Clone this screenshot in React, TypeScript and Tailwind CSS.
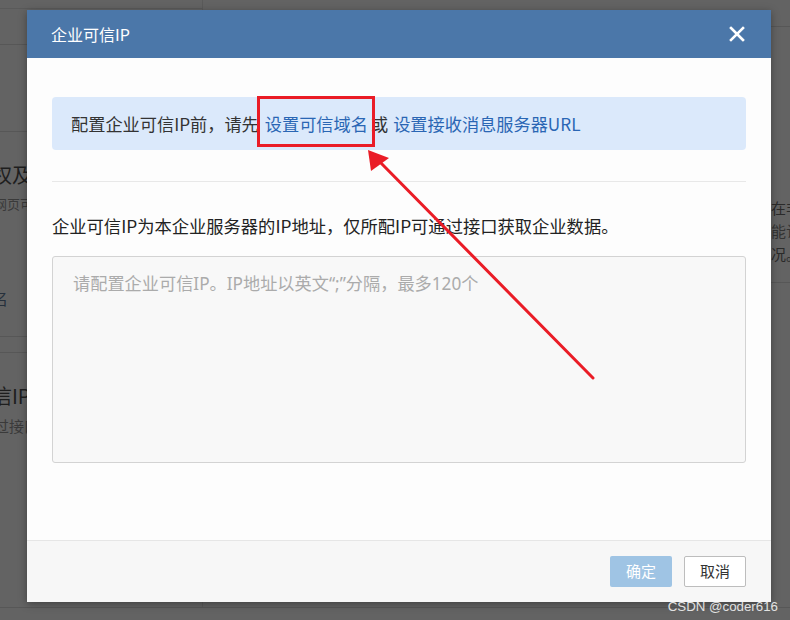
const cjk = "font-['Noto_Sans_CJK_SC',_'Noto_Sans',_sans-serif]";

function BackdropPage() {
  return (
    <div className="flex h-full w-full flex-col">
      <div className="flex flex-1">
        {/* left strip of the page behind the overlay */}
        <div className="flex w-[203px] flex-col border-r border-[#5a5a5a]">
          <div className="h-[9px] border-b border-[#5a5a5a]" />
          <div className="h-[36px] border-b border-[#575757]" />
          <div className="h-[87px] border-b border-[#575757]" />
          <div className="flex h-[205px] flex-col border-b border-[#575757]">
            <div className="pt-[28px] whitespace-nowrap text-[20px] leading-[30px] text-[#1e1e1e]">
              <span className="-ml-[8px]">权及</span>
            </div>
            <div className="pt-[4px] whitespace-nowrap text-[13px] leading-[20px] text-[#3a3a3a]">
              <span className="-ml-[6px]">网页可</span>
            </div>
            <div className="pt-[72px] whitespace-nowrap text-[16px] leading-[24px] text-[#26303c]">
              <span className="-ml-[8px]">名</span>
            </div>
          </div>
          <div className="h-[16px] border-b border-[#575757]" />
          <div className="flex flex-col">
            <div className="pt-[28px] whitespace-nowrap text-[20px] leading-[30px] text-[#1e1e1e]">
              <span className="-ml-[8px]">信IP</span>
            </div>
            <div className="pt-[4px] whitespace-nowrap text-[15px] leading-[22px] text-[#3a3a3a]">
              <span className="-ml-[6px]">过接口</span>
            </div>
          </div>
        </div>
        <div className="flex-1" />
        {/* right strip */}
        <div className="flex w-[30px] flex-col">
          <div className="h-[27px] border-b border-[#575757]" />
          <div className="flex h-[256px] flex-col border-b border-[#575757] pt-[169px] pl-[11px] text-[15px] leading-[23px] text-[#2a2a2a] whitespace-nowrap">
            <span>在非</span>
            <span className="text-[#333]">能认</span>
            <span>况。</span>
          </div>
        </div>
      </div>
      <div className="h-[13px] border-t border-[#575757]" />
    </div>
  );
}

function Annotation() {
  return (
    <svg
      className="pointer-events-none absolute left-0 top-0"
      width="790"
      height="620"
      viewBox="0 0 790 620"
    >
      <rect x="258.5" y="97.5" width="115" height="48" fill="none" stroke="#ea1c26" strokeWidth="3" />
      <line x1="593" y1="378" x2="378" y2="160" stroke="#ea1c26" strokeWidth="3" strokeLinecap="round" />
      <polygon points="368,150 389,158 371,171" fill="#ea1c26" />
    </svg>
  );
}

export default function App() {
  return (
    <div className={`relative h-[620px] w-[790px] overflow-hidden bg-[#636363] ${cjk}`}>
      <BackdropPage />

      {/* dialog */}
      <div className="absolute left-[27px] top-[10px] flex h-[592px] w-[744px] flex-col bg-[#fdfdfd] shadow-[0_2px_8px_rgba(0,0,0,0.35)]">
        <div className="flex h-[48px] shrink-0 items-center justify-between bg-[#4b77a9] pl-[24px] pr-[26px]">
          <span className="text-[16px] text-white">企业可信IP</span>
          <svg width="16" height="16" viewBox="0 0 16 16">
            <path d="M2 2 L14 14 M14 2 L2 14" stroke="#ffffff" strokeWidth="2.6" strokeLinecap="square" />
          </svg>
        </div>

        <div className="flex flex-1 flex-col px-[25px] pt-[39px]">
          <div className="flex h-[53px] items-center rounded-[4px] bg-[#dbe9fb] pl-[19px] text-[17.2px] text-[#333]">
            <span>配置企业可信IP前，请先</span>
            <span className="ml-[6px] text-[#2a66b4]">设置可信域名</span>
            <span className="ml-[3px]">或</span>
            <span className="ml-[5px] text-[#2a66b4]">设置接收消息服务器URL</span>
          </div>

          <div className="mt-[31px] border-t border-[#e8e8e8]" />

          <p className="pt-[31px] text-[17.3px] leading-[26px] text-[#222]">
            企业可信IP为本企业服务器的IP地址，仅所配IP可通过接口获取企业数据。
          </p>

          <textarea
            className="mt-[17px] h-[207px] w-full resize-none rounded-[3px] border border-[#d3d3d3] bg-[#f8f8f8] px-[20px] py-[14px] font-['Noto_Sans',_'Noto_Sans_CJK_SC',_sans-serif] text-[17.2px] leading-[26px] text-[#333] outline-none placeholder:text-[#ababab]"
            placeholder={"请配置企业可信IP。IP地址以英文\u201c;\u201d分隔，最多120个"}
          />
        </div>

        <div className="flex h-[62px] shrink-0 items-center justify-end gap-[12px] border-t border-[#e6e6e6] bg-[#f7f7f7] pr-[25px]">
          <button className="h-[31px] w-[62px] rounded-[2px] bg-[#9fc4e4] text-[15px] text-white">
            确定
          </button>
          <button className="h-[31px] w-[62px] rounded-[2px] border border-[#bdbdbd] bg-white text-[15px] text-[#333]">
            取消
          </button>
        </div>
      </div>

      <Annotation />

      <span className="pointer-events-none absolute right-[12px] bottom-[3px] font-['Liberation_Sans',_sans-serif] text-[13.3px] text-[#e2e2e2]">
        CSDN @coder616
      </span>
    </div>
  );
}
